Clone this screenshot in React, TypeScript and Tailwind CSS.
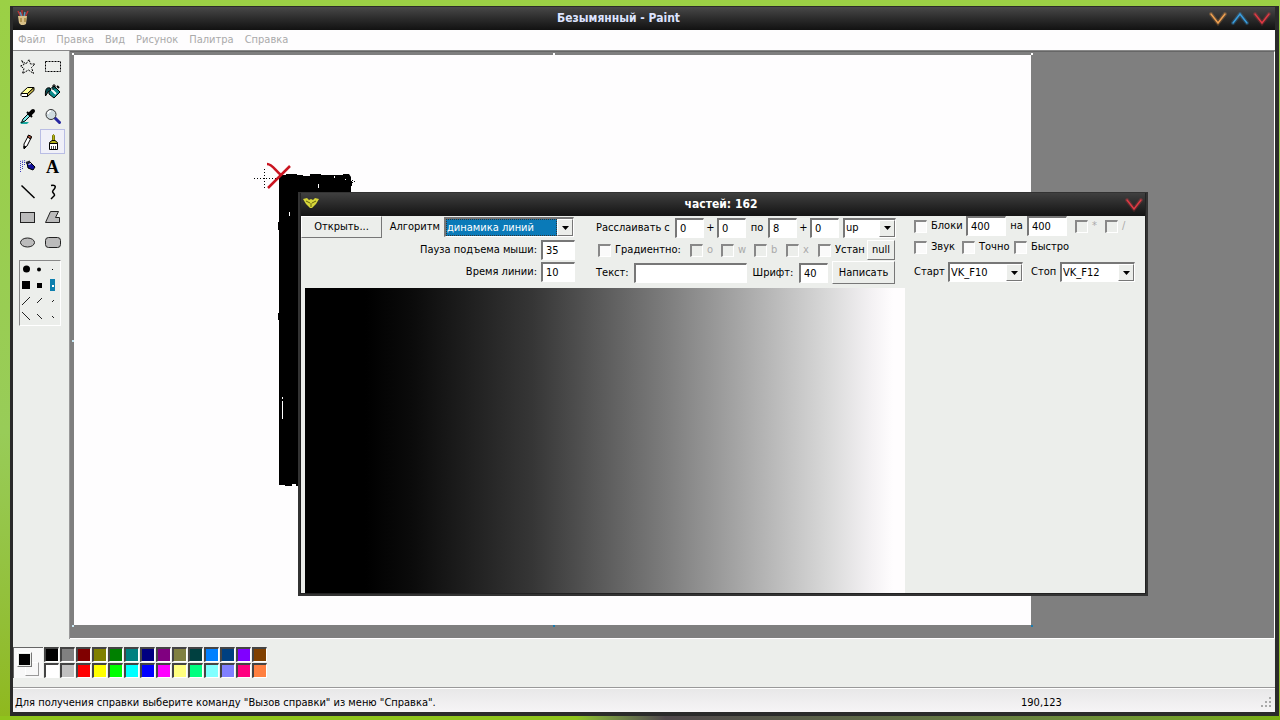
import React from "react";

const bevelOut =
  "border border-t-white border-l-white border-r-[#777] border-b-[#777]";
const bevelIn =
  "border-t-2 border-l-2 border-r border-b border-t-[#777] border-l-[#777] border-r-white border-b-white bg-white";

function Chevron({ color, up = false, label }: { color: string; up?: boolean; label: string }) {
  return (
    <button type="button" aria-label={label} className="flex h-4 w-[22px] items-center justify-center">
      <svg width="18" height="14" viewBox="0 0 18 14" fill="none" strokeLinecap="round">
        <path d={up ? "M2 11L9 2L16 11" : "M2 2L9 11L16 2"} stroke={color} strokeWidth="4" opacity="0.25" />
        <path d={up ? "M2 11L9 2L16 11" : "M2 2L9 11L16 2"} stroke={color} strokeWidth="1.5" />
      </svg>
    </button>
  );
}

function Field({ label, value, className }: { label: string; value: string; className: string }) {
  return (
    <input
      aria-label={label}
      defaultValue={value}
      className={`${bevelIn} ${className} h-5 shrink-0 px-[3px] outline-none`}
    />
  );
}

function Drop({
  label,
  value,
  className,
  active = false,
}: {
  label: string;
  value: string;
  className: string;
  active?: boolean;
}) {
  return (
    <div className={`${bevelIn} ${className} relative flex h-5 shrink-0`}>
      <select
        aria-label={label}
        defaultValue={value}
        className={
          active
            ? "mr-4 min-w-0 grow appearance-none border border-dotted border-[#333] bg-[#0a7ab8] text-white outline-none"
            : "min-w-0 grow appearance-none bg-white pr-4 pl-px outline-none"
        }
      >
        <option>{value}</option>
      </select>
      <span
        className={`${bevelOut} pointer-events-none absolute inset-y-0 right-0 flex w-4 items-center justify-center bg-[#eceeeb]`}
      >
        <svg width="7" height="4" viewBox="0 0 7 4">
          <path d="M0 0H7L3.5 4Z" fill="#000" />
        </svg>
      </span>
    </div>
  );
}

function Check({ label, className, dim = false }: { label: string; className: string; dim?: boolean }) {
  return (
    <label className={`${className} flex shrink-0 items-center gap-1 whitespace-nowrap`}>
      <input
        type="checkbox"
        disabled={dim}
        className={`size-[13px] shrink-0 appearance-none border-t-2 border-l-2 border-r border-b border-t-[#888] border-l-[#888] border-r-white border-b-white ${
          dim ? "bg-[#eceeeb]" : "bg-[#fafafa]"
        }`}
      />
      <span className={dim ? "text-[#aaa]" : ""}>{label}</span>
    </label>
  );
}

const tools: { name: string; art: React.ReactNode }[] = [
  {
    name: "Выделение произвольной области",
    art: <path d="M2.500 2.500L7 6L10 1.500L11.500 6H16L12.500 9.500L14.500 15.500L9.500 12L3.500 15.500L5 10.500L1.500 8L5 6.500Z" fill="none" stroke="#000" strokeDasharray="2 1" />,
  },
  {
    name: "Выделение",
    art: <rect x="1.5" y="3.5" width="15" height="10" fill="none" stroke="#000" strokeDasharray="2 1" />,
  },
  {
    name: "Ластик",
    art: (
      <g stroke="#000" strokeLinejoin="round">
        <path d="M2 10.500L8.500 4.500H15L8.500 10.500Z" fill="#ffff9c" />
        <path d="M2 10.500H8.500V13.500H3L2 12.500Z" fill="#fff" />
        <path d="M8.500 10.500L15 4.500V7.500L8.500 13.500Z" fill="#c8b84a" />
      </g>
    ),
  },
  {
    name: "Заливка",
    art: (
      <g stroke="#000">
        <path d="M5 7L10 3L16 9L10 15L5 11Z" fill="#0a8c8c" />
        <path d="M7 6L12 11" stroke="#fff" strokeWidth="2" />
        <path d="M9 7V2H11V6" fill="none" />
        <path d="M6 5C2 4 1 7 1.500 13L4 9L7 7Z" fill="#08494d" />
        <path d="M13 3L15 5" strokeWidth="2" />
      </g>
    ),
  },
  {
    name: "Выбор цветов",
    art: (
      <g>
        <path d="M1 14H10L8 16H2Z" fill="#19a9a0" />
        <path d="M2.500 14.500L4 11L9 6L11 8L6 13Z" fill="#7ee5e5" stroke="#000" />
        <path d="M8 4L13 9" stroke="#000" strokeWidth="2" />
        <path d="M11 6L14 3" stroke="#000" strokeWidth="4" strokeLinecap="round" />
      </g>
    ),
  },
  {
    name: "Масштаб",
    art: (
      <g>
        <path d="M11 10L15.500 14.500" stroke="#2626a0" strokeWidth="3" strokeLinecap="round" />
        <circle cx="7" cy="6.500" r="5" fill="#d0dce0" stroke="#333" />
        <path d="M4 6Q4 3 7 3" stroke="#fff" fill="none" strokeWidth="1.500" />
      </g>
    ),
  },
  {
    name: "Карандаш",
    art: (
      <g stroke="#000">
        <path d="M5 11L9.500 2.500L12.500 4L8 13L5 15Z" fill="#fff" />
        <path d="M8.500 4L9.500 2L12.500 3.500L11.500 6Z" fill="#b5523a" />
        <path d="M5 13V16L7 14Z" fill="#000" />
      </g>
    ),
  },
  {
    name: "Кисть",
    art: (
      <g stroke="#000">
        <path d="M8.500 8V2.500Q9.500 0.500 10.500 2.500V8Z" fill="#b5b318" stroke="#77770a" />
        <path d="M5.500 11V9.500L8 7.500H11L13.500 9.500V11Z" fill="#b5b318" />
        <path d="M5.500 10.500H13.500V16.500H5.500Z" fill="#fff" />
        <path d="M7.500 13V16M9.500 13V16M11.500 13V16" strokeWidth="0.700" />
      </g>
    ),
  },
  {
    name: "Распылитель",
    art: (
      <g>
        <path d="M1.500 14V4M3.500 11V3M5.500 7V3M1 3.500L7 2.500" stroke="#3838c0" strokeDasharray="1 1" />
        <path d="M8 5L11 4L16 9L14 12L9 10Z" fill="#10109a" stroke="#000" />
        <path d="M7 5L11 3.500" stroke="#223" strokeWidth="2" />
        <path d="M9.500 6.500L12 5.500" stroke="#fff" />
      </g>
    ),
  },
  {
    name: "Надпись",
    art: (
      <text x="2" y="15" fontFamily="Liberation Serif, serif" fontWeight="bold" fontSize="18">
        A
      </text>
    ),
  },
  { name: "Линия", art: <path d="M2.500 2.500L15.500 15" stroke="#000" strokeWidth="1.500" /> },
  {
    name: "Кривая",
    art: <path d="M7 2.500C12 1.500 12.500 4 9 7.500C7 10 11 10 10.500 12.500L7 16" stroke="#000" fill="none" strokeWidth="1.500" />,
  },
  { name: "Прямоугольник", art: <rect x="1.500" y="4.500" width="14" height="10" fill="#bbb" stroke="#222" /> },
  {
    name: "Многоугольник",
    art: <path d="M6.500 3.500H14.500L11.500 9.500H15.500V14.500H1.500Z" fill="#bbb" stroke="#222" />,
  },
  { name: "Эллипс", art: <ellipse cx="8.500" cy="9.500" rx="7" ry="4.500" fill="#bbb" stroke="#222" /> },
  {
    name: "Скругленный прямоугольник",
    art: <rect x="1.500" y="4.500" width="15" height="10" rx="3" fill="#bbb" stroke="#222" />,
  },
];

const palette = [
  "#000000", "#808080", "#800000", "#808000", "#008000", "#008080", "#000080",
  "#800080", "#808040", "#004040", "#0080ff", "#004080", "#8000ff", "#804000",
  "#ffffff", "#c0c0c0", "#ff0000", "#ffff00", "#00ff00", "#00ffff", "#0000ff",
  "#ff00ff", "#ffff80", "#00ff80", "#80ffff", "#8080ff", "#ff0080", "#ff8040",
];

const menus = ["Файл", "Правка", "Вид", "Рисунок", "Палитра", "Справка"];

function Toolbox() {
  return (
    <aside className="flex w-[57px] shrink-0 flex-col items-center border-r border-[#999] bg-[#eceeeb] pt-[3px] pr-0.5">
      <div className="grid grid-cols-2">
        {tools.map((t) => (
          <button
            key={t.name}
            type="button"
            aria-label={t.name}
            className={`flex h-[25px] w-[25px] items-center justify-center border ${
              t.name === "Кисть" ? "border-[#b9bde4] bg-[#f0f0f8]" : "border-transparent"
            }`}
          >
            <svg width="18" height="18" viewBox="0 0 18 18">
              {t.art}
            </svg>
          </button>
        ))}
      </div>
      <div className="mt-1.5 h-[66px] w-[42px] border border-t-[#888] border-l-[#888] border-r-white border-b-white">
        <svg width="40" height="64" viewBox="0 0 40 64">
          <circle cx="6.500" cy="8" r="3.500" />
          <circle cx="19" cy="8.500" r="2" />
          <rect x="32" y="8" width="1" height="1" />
          <rect x="2" y="20" width="8" height="8" />
          <rect x="17" y="22" width="5" height="5" />
          <rect x="30" y="18" width="5" height="12" fill="#0d7fae" />
          <rect x="32" y="24" width="2" height="2" fill="#fff" />
          <path
            d="M2 44L10 36M17 42L22 37M32 41L34 39M2 51L10 59M17 53L22 58M32 55L34 57"
            stroke="#222"
          />
        </svg>
      </div>
    </aside>
  );
}

function Handle({ className }: { className: string }) {
  return <span className={`${className} absolute size-[2px]`} />;
}

function Canvas() {
  return (
    <main className="min-w-0 grow border-t border-r border-b border-t-[#666] border-r-white border-b-white bg-[#7f7f7f] pt-[3px] pl-1">
      <div className="relative h-[570px] w-[957px] bg-[#fefdfe]">
        <svg className="absolute top-[95px] left-[176px]" width="120" height="350" viewBox="0 0 120 350">
          <path d="M29 25H36V24H47V25H53V26H60V24H71V25H93V24H99L101 27V31H102V36H101V60H60V334H56V335H50V336H46V334H42V336H35V335H29V170H28V163H29V80H28V72H29Z" />
          <path
            d="M39.500 62V66M68.500 34V38M84.500 26V28M95.500 29V30M32.500 247V249M32.500 251V269"
            stroke="#fff"
          />
          <path d="M102.500 30V34M104 31.500H105" stroke="#000" strokeDasharray="1 1" />
          <path d="M4 28.500H30M14.500 19V38" stroke="#000" strokeDasharray="1 2" />
          <path d="M17 14C22 14 25 20 31 25M40 16L27 29L18 38" stroke="#ca1420" strokeWidth="2.500" fill="none" />
        </svg>
        <Handle className="-top-0.5 -left-0.5 bg-white" />
        <Handle className="-top-0.5 left-1/2 bg-white" />
        <Handle className="-top-0.5 -right-0.5 bg-white" />
        <Handle className="top-1/2 -left-0.5 bg-[#c8e8f4]" />
        <Handle className="-bottom-0.5 -left-0.5 bg-[#c8e8f4]" />
        <Handle className="-bottom-0.5 left-1/2 bg-[#1a7cae]" />
        <Handle className="-right-0.5 -bottom-0.5 bg-[#1a7cae]" />
      </div>
    </main>
  );
}

function Dialog() {
  return (
    <section className="absolute top-[192px] left-[298px] w-[850px] border-2 border-t border-[#333] bg-[#222] p-px pt-0">
      <header className="flex h-[23px] items-center bg-linear-to-b from-[#404040] to-[#141414] pl-0.5">
        <svg width="16" height="18" viewBox="0 0 16 18">
          <path d="M0 3L4 2L6 4L8 3L10 4L12 2L16 3L13 8L9 12H7L3 8Z" fill="#d6d63a" />
          <path d="M3 5L7 7M13 5L9 7M8 7V11" stroke="#65630c" />
        </svg>
        <h2 className="grow pb-0.5 text-center text-[12px] font-bold text-white">частей: 162</h2>
        <Chevron color="#e03a44" label="Закрыть" />
      </header>
      <div className="bg-[#eceeeb]">
        <form className="flex h-[72px] items-start">
          <div className="flex w-[295px] flex-col">
            <div className="flex h-[22px] items-center">
              <button type="button" className={`${bevelOut} h-[22px] w-[81px] shrink-0`}>
                Открыть...
              </button>
              <span className="w-[62px] pr-1 text-right">Алгоритм</span>
              <Drop label="Алгоритм" value="динамика линий" className="w-[130px]" active />
            </div>
            <label className="flex h-[23px] items-center">
              <span className="w-[240px] pr-1 text-right">Пауза подъема мыши:</span>
              <Field label="Пауза подъема мыши" value="35" className="w-[34px]" />
            </label>
            <label className="flex h-[22px] items-center">
              <span className="w-[240px] pr-1 text-right">Время линии:</span>
              <Field label="Время линии" value="10" className="w-[34px]" />
            </label>
          </div>
          <div className="flex w-[318px] flex-col">
            <div className="flex h-[23px] items-center">
              <span className="w-[79px]">Расслаивать с</span>
              <Field label="Расслаивать с" value="0" className="w-[29px]" />
              <span className="w-[13px] text-center">+</span>
              <Field label="Добавка к началу" value="0" className="w-[29px]" />
              <span className="w-[22px] text-center">по</span>
              <Field label="по" value="8" className="w-[29px]" />
              <span className="w-[13px] text-center">+</span>
              <Field label="Добавка к концу" value="0" className="w-[29px]" />
              <Drop label="Направление" value="up" className="ml-1 w-[53px]" />
            </div>
            <div className="flex h-[22px] items-center pl-0.5">
              <Check label="Градиентно:" className="w-[92px]" />
              <Check label="o" className="w-[31px]" dim />
              <Check label="w" className="w-[33px]" dim />
              <Check label="b" className="w-8" dim />
              <Check label="x" className="w-8" dim />
              <Check label="Устан" className="w-[49px]" />
              <button type="button" className={`${bevelOut} h-5 w-7`}>
                null
              </button>
            </div>
            <div className="flex h-[23px] items-center">
              <span className="w-[38px]">Текст:</span>
              <Field label="Текст" value="" className="w-[113px]" />
              <span className="w-[52px] text-center">Шрифт:</span>
              <Field label="Шрифт" value="40" className="w-[29px]" />
              <button type="button" className={`${bevelOut} ml-1 h-[23px] w-[63px]`}>
                Написать
              </button>
            </div>
          </div>
          <div className="flex flex-col">
            <div className="flex h-5 items-center">
              <Check label="Блоки" className="w-[52px]" />
              <Field label="Ширина блока" value="400" className="w-10" />
              <span className="w-[21px] text-center">на</span>
              <Field label="Высота блока" value="400" className="w-10" />
              <Check label="*" className="ml-2 w-[30px]" dim />
              <Check label="/" className="w-[30px]" dim />
            </div>
            <div className="flex h-[22px] items-center">
              <Check label="Звук" className="w-12" />
              <Check label="Точно" className="w-[52px]" />
              <Check label="Быстро" className="w-[60px]" />
            </div>
            <div className="flex h-7 items-center">
              <span className="w-[34px]">Старт</span>
              <Drop label="Старт" value="VK_F10" className="w-[75px]" />
              <span className="w-[37px] pl-2">Стоп</span>
              <Drop label="Стоп" value="VK_F12" className="w-[75px]" />
            </div>
          </div>
        </form>
        <div className="ml-1 h-[305px] w-[600px] bg-[linear-gradient(to_right,#000_10%,#0b0b0b_18%,#1c1c1c_26%,#363636_38%,#565656_48%,#7c7c7c_60%,#a8a8a8_73%,#d8d8d8_87%,#f2f0f2_94%,#fffdfe_98%)]" />
      </div>
    </section>
  );
}

export default function App() {
  return (
    <div className="relative flex h-screen flex-col overflow-hidden bg-linear-to-b from-[#9bd045] via-[#98cc58] via-60% to-[#8fb81c] pt-1.5 font-['DejaVu_Sans_Condensed','DejaVu_Sans',sans-serif] text-[11px] leading-[14px] text-black">
      <div className="flex min-h-0 grow pr-px pl-2.5">
        <div className="flex min-w-0 grow flex-col border-t border-r-4 border-b-4 border-l-[3px] border-[#2a2a2a]">
          <header className="flex h-[23px] shrink-0 items-center bg-linear-to-b from-[#484848] to-[#121212] pr-0.5 pl-[3px]">
            <svg width="14" height="20" viewBox="0 0 14 20">
              <path d="M2 2L5 8M6 1V8M12 2L9 8" stroke="#b33" strokeWidth="1.500" />
              <path d="M4 3L6 8M9 3L8 8" stroke="#5a93b8" strokeWidth="1.500" />
              <path d="M2 7H11L10 15L8 16H5L3 14Z" fill="#d8c088" />
              <path d="M5 9V13M9 9V13" stroke="#8a6a20" />
            </svg>
            <h1 className="grow pb-0.5 text-center text-[12px] font-bold text-[#dde3ff]">
              Безымянный - Paint
            </h1>
            <Chevron color="#f0a050" label="Свернуть" />
            <Chevron color="#3a9ee0" up label="Развернуть" />
            <Chevron color="#e03a44" label="Закрыть" />
          </header>
          <nav className="flex h-5 shrink-0 items-center gap-[11px] bg-[#fefdfe] px-[5px] text-[#aaa]">
            {menus.map((m) => (
              <button key={m} type="button">
                {m}
              </button>
            ))}
          </nav>
          <div className="flex min-h-0 grow border-t border-[#888] bg-[#eceeeb]">
            <Toolbox />
            <Canvas />
          </div>
          <div className="flex h-[49px] shrink-0 items-start border-b border-[#999] bg-[#eceeeb] pt-2">
            <div className="relative h-[31px] w-[30px] border-t border-l border-[#666] bg-[#f8f8f8]">
              <span className="absolute top-[14px] left-[11px] size-[14px] border border-t-white border-l-white border-r-[#999] border-b-[#999]" />
              <span className={`${bevelOut} absolute top-1 left-[3px] size-[15px] bg-[#eceeeb] p-px`}>
                <span className="block size-full bg-black" />
              </span>
            </div>
            <div className="ml-px grid grid-cols-14 gap-px">
              {palette.map((c) => (
                <button
                  key={c}
                  type="button"
                  aria-label={c}
                  className="size-[15px] border-t-2 border-l-2 border-r border-b border-t-[#444] border-l-[#444] border-r-white border-b-white"
                  style={{ backgroundColor: c }}
                />
              ))}
            </div>
          </div>
          <footer className="flex h-6 shrink-0 items-center border-t border-white bg-linear-to-b from-[#e8e8e8] to-[#f6f4f6] px-0.5 pt-1">
            <span className="grow">
              Для получения справки выберите команду "Вызов справки" из меню "Справка".
            </span>
            <span className="w-[240px]">190,123</span>
            <svg width="12" height="12" viewBox="0 0 12 12" fill="#aaa">
              <path d="M8 0h2v2h-2zM8 4h2v2h-2zM4 4h2v2h-2zM8 8h2v2h-2zM4 8h2v2h-2zM0 8h2v2h-2z" />
            </svg>
          </footer>
        </div>
      </div>
      <div className="h-1 shrink-0 bg-linear-to-r from-[#8fc41c] from-45% via-[#50484c] via-52% to-[#7ab010]" />
      <Dialog />
    </div>
  );
}
